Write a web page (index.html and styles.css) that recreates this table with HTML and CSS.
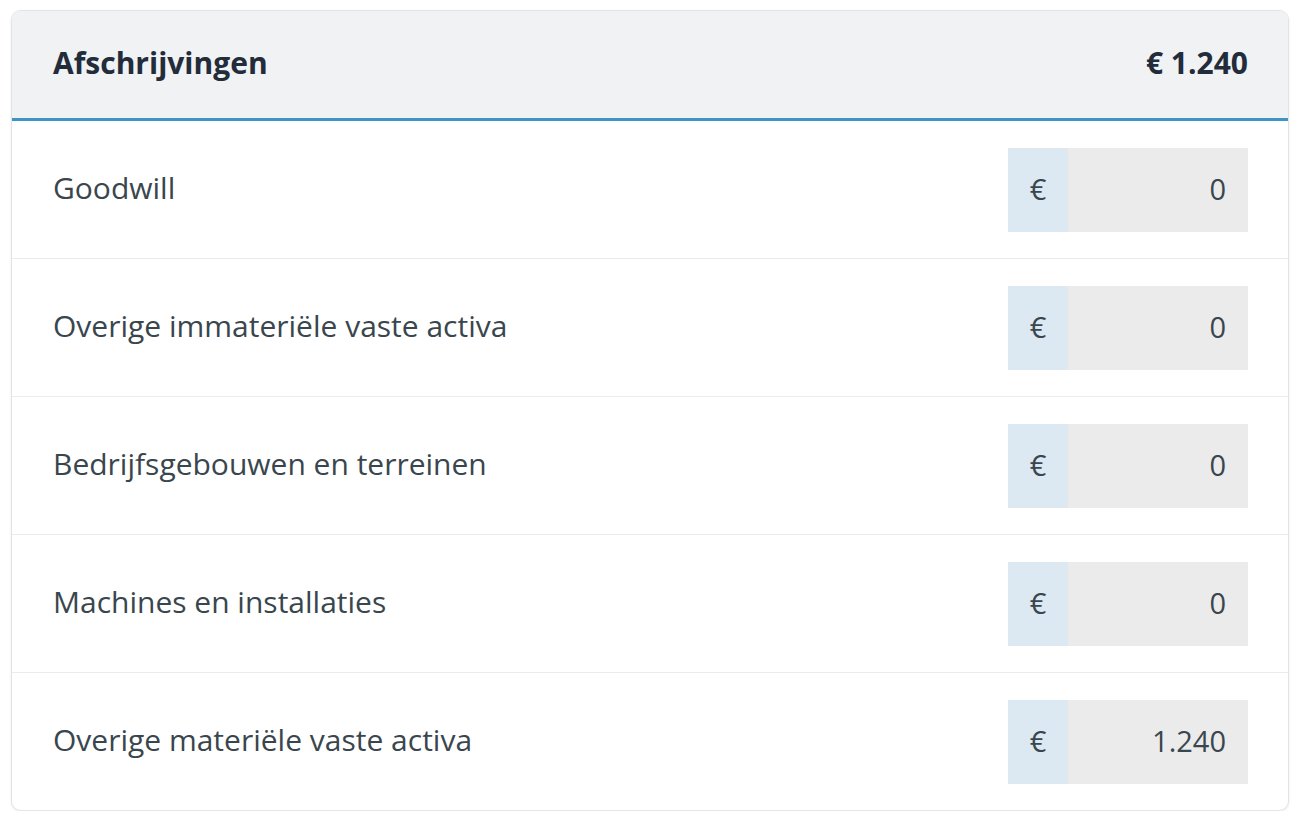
FILE: index.html
```html
<!DOCTYPE html>
<html lang="nl">
<head>
<meta charset="utf-8">
<title>Afschrijvingen</title>
<link rel="stylesheet" href="styles.css">
</head>
<body>
<section class="card">
  <header class="card-head">
    <h2 class="title">Afschrijvingen</h2>
    <span class="total">€ 1.240</span>
  </header>
  <div class="row">
    <span class="label">Goodwill</span>
    <div class="field"><span class="prefix">€</span><span class="value">0</span></div>
  </div>
  <div class="row">
    <span class="label">Overige immateriële vaste activa</span>
    <div class="field"><span class="prefix">€</span><span class="value">0</span></div>
  </div>
  <div class="row">
    <span class="label">Bedrijfsgebouwen en terreinen</span>
    <div class="field"><span class="prefix">€</span><span class="value">0</span></div>
  </div>
  <div class="row">
    <span class="label">Machines en installaties</span>
    <div class="field"><span class="prefix">€</span><span class="value">0</span></div>
  </div>
  <div class="row">
    <span class="label">Overige materiële vaste activa</span>
    <div class="field"><span class="prefix">€</span><span class="value">1.240</span></div>
  </div>
</section>
</body>
</html>
```
FILE: styles.css
```css
* { box-sizing: border-box; }
html, body { margin: 0; padding: 0; background: #ffffff; }
body {
  padding: 10px 11px 0 11px;
  font-family: "Open Sans", Lato, sans-serif;
}
.card {
  border: 1px solid #e3e4e6;
  border-radius: 10px;
  background: #ffffff;
  box-shadow: 0 1px 3px rgba(0,0,0,0.08);
  overflow: hidden;
}
.card-head {
  display: flex;
  justify-content: space-between;
  align-items: center;
  height: 110px;
  padding: 0 40px 4px 41px;
  background: #f0f2f4;
  border-bottom: 3px solid #3d94c5;
}
.title, .total {
  margin: 0;
  font-size: 30px;
  line-height: 1.2;
  font-weight: 700;
  color: #222c3a;
}
.row {
  display: flex;
  justify-content: space-between;
  align-items: center;
  height: 138px;
  padding: 0 40px 0 41px;
  border-bottom: 1px solid #ececec;
}
.row:last-child { border-bottom: none; height: 137px; }
.label {
  font-size: 30px;
  line-height: 1.2;
  padding-bottom: 4px;
  color: #3a464e;
}
.field {
  display: flex;
  width: 240px;
  height: 84px;
  font-size: 29px;
  color: #3a464e;
}
.prefix {
  width: 60px;
  display: flex;
  align-items: center;
  justify-content: center;
  padding-bottom: 2px;
  background: #dce9f3;
}
.value {
  flex: 1;
  display: flex;
  align-items: center;
  justify-content: flex-end;
  padding-right: 22px;
  padding-bottom: 2px;
  background: #ebebeb;
}
```
